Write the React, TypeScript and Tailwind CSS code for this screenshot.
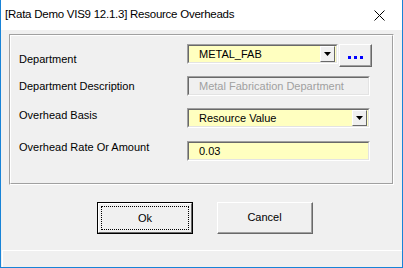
import React from 'react';

const uiFont = { fontFamily: '"Liberation Sans", Arial, sans-serif' };

function DropButton() {
    return (
        <div className="w-[15px] h-[16px] bg-[#f0f0f0] border-t border-l border-t-white border-l-white border-b border-r border-b-[#696969] border-r-[#696969] flex items-center justify-center mr-[1px]">
            <svg width="7" height="4" viewBox="0 0 7 4">
                <path d="M0 0h7L3.5 4z" fill="#000" />
            </svg>
        </div>
    );
}

function Sunken({ width, yellow, children }: { width: string; yellow?: boolean; children: React.ReactNode }) {
    return (
        <div className={`${width} h-[20px] border-t border-l border-t-[#a0a0a0] border-l-[#a0a0a0] border-b border-r border-b-white border-r-white`}>
            <div className={`h-full border-t border-l border-t-[#696969] border-l-[#696969] border-b border-r border-b-[#e3e3e3] border-r-[#e3e3e3] flex items-center ${yellow ? 'bg-[#ffffc0]' : 'bg-[#f0f0f0]'}`}>
                {children}
            </div>
        </div>
    );
}

export default function App() {
    return (
        <div className="w-[403px] h-[268px] bg-[#f0f0f0] border-l border-r border-b border-[#1883d7] flex flex-col overflow-hidden" style={uiFont}>
            {/* title bar */}
            <div className="h-[30px] bg-white flex items-center justify-between shrink-0">
                <span className="pl-[4px] text-[11.5px] tracking-[-0.25px] text-black">
                    [Rata Demo VIS9 12.1.3] Resource Overheads
                </span>
                <div className="w-[46px] h-[30px] flex items-center justify-center">
                    <svg width="11" height="11" viewBox="0 0 11 11">
                        <path d="M0.5 0.5L10.5 10.5M10.5 0.5L0.5 10.5" stroke="#000" strokeWidth="1" />
                    </svg>
                </div>
            </div>

            <div className="flex-1 flex flex-col">
                {/* group box */}
                <div className="mt-[4px] mx-[8px] h-[151px] border-t border-l border-t-[#a0a0a0] border-l-[#a0a0a0] border-b border-r border-b-white border-r-white">
                    <div className="h-full border-t border-l border-t-white border-l-white border-b border-r border-b-[#a0a0a0] border-r-[#a0a0a0] pl-[8px] text-[11px] text-black">
                        <div className="mt-[8px] flex items-start h-[23px]">
                            <span className="w-[168px] mt-[8px] leading-[14px]">Department</span>
                            <Sunken width="w-[151px]" yellow>
                                <span className="flex-1 pl-[10px] leading-[14px]">METAL_FAB</span>
                                <DropButton />
                            </Sunken>
                            <div className="ml-[1px] w-[33px] h-[23px] border-t border-l border-t-white border-l-white border-b border-r border-b-[#696969] border-r-[#696969]">
                                <div className="h-full border-b border-r border-b-[#a0a0a0] border-r-[#a0a0a0] flex items-center justify-center gap-[3px] pt-[4px]">
                                    <div className="w-[3px] h-[3px] bg-[#0000ff]" />
                                    <div className="w-[3px] h-[3px] bg-[#0000ff]" />
                                    <div className="w-[3px] h-[3px] bg-[#0000ff]" />
                                </div>
                            </div>
                        </div>

                        <div className="mt-[9px] flex items-start h-[20px]">
                            <span className="w-[168px] mt-[3px] leading-[14px]">Department Description</span>
                            <Sunken width="w-[183px]">
                                <span className="pl-[10px] leading-[14px] text-[#a0a0a0]">Metal Fabrication Department</span>
                            </Sunken>
                        </div>

                        <div className="mt-[12px] flex items-start h-[20px]">
                            <span className="w-[168px] leading-[14px]">Overhead Basis</span>
                            <Sunken width="w-[183px]" yellow>
                                <span className="flex-1 pl-[10px] leading-[14px]">Resource Value</span>
                                <DropButton />
                            </Sunken>
                        </div>

                        <div className="mt-[13px] flex items-start h-[20px]">
                            <span className="w-[168px] mt-[-1px] leading-[14px]">Overhead Rate Or Amount</span>
                            <Sunken width="w-[183px]" yellow>
                                <span className="pl-[10px] leading-[14px]">0.03</span>
                            </Sunken>
                        </div>
                    </div>
                </div>

                {/* buttons */}
                <div className="mt-[17px] pl-[96px] flex gap-[24px] text-[11px] text-black">
                    <div className="w-[96px] h-[32px] border border-black">
                        <div className="h-full border-t border-l border-t-white border-l-white border-b border-r border-b-[#696969] border-r-[#696969] p-[2px]">
                            <div className="h-full border border-dotted border-black flex items-center justify-center">Ok</div>
                        </div>
                    </div>
                    <div className="w-[96px] h-[32px] border-t border-l border-t-white border-l-white border-b border-r border-b-[#696969] border-r-[#696969]">
                        <div className="h-full border-b border-r border-b-[#a0a0a0] border-r-[#a0a0a0] flex items-center justify-center">Cancel</div>
                    </div>
                </div>

                {/* status strip */}
                <div className="mt-auto h-[17px] ml-[1px] border-t border-l border-t-white border-l-white" />
            </div>
        </div>
    );
}
